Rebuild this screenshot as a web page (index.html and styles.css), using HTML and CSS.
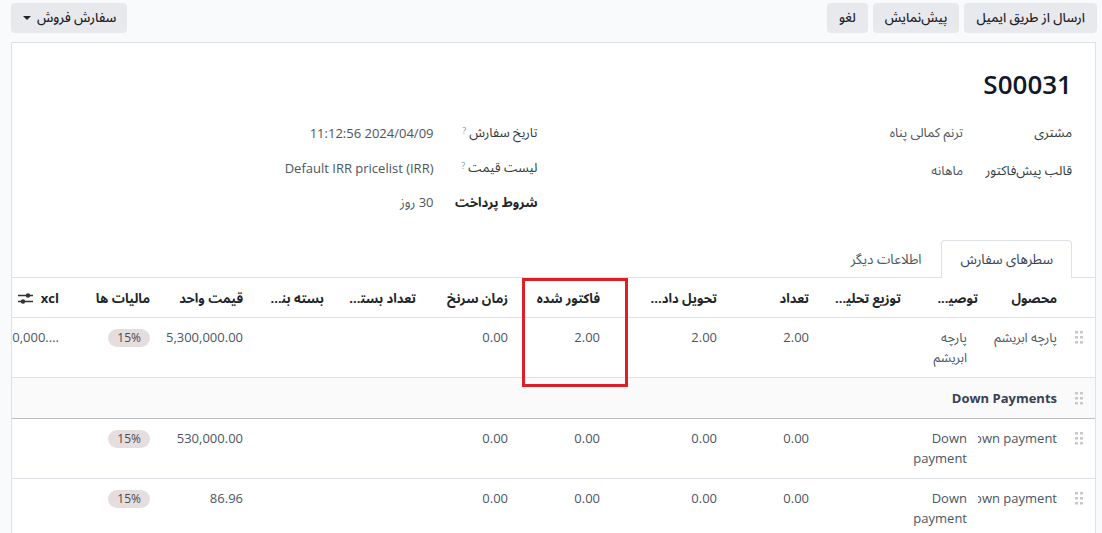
FILE: index.html
```html
<!DOCTYPE html>
<html lang="fa" dir="rtl">
<head>
<meta charset="utf-8">
<title>S00031</title>
<link rel="stylesheet" href="styles.css">
</head>
<body>
<div class="cp">
  <div class="cp-actions">
    <button class="btn">ارسال از طریق ایمیل</button>
    <button class="btn">پیش‌نمایش</button>
    <button class="btn">لغو</button>
  </div>
  <button class="btn btn-dd">سفارش فروش <span class="caret"></span></button>
</div>

<div class="sheet">
  <div class="sheet-head">
    <h1 class="title">S00031</h1>
    <div class="groups">
      <div class="group group-r">
        <div class="lbl">مشتری</div><div class="val">ترنم کمالی پناه</div>
        <div class="lbl">قالب پیش‌فاکتور</div><div class="val">ماهانه</div>
      </div>
      <div class="group group-l">
        <div class="lbl">تاریخ سفارش<sup class="help">?</sup></div><div class="val">2024/04/09 11:12:56</div>
        <div class="lbl">لیست قیمت<sup class="help">?</sup></div><div class="val"><span dir="ltr">Default IRR pricelist (IRR)</span></div>
        <div class="lbl lbl-b">شروط پرداخت</div><div class="val">30 روز</div>
      </div>
    </div>
    <div class="tabs">
      <div class="tab active">سطرهای سفارش</div>
      <div class="tab">اطلاعات دیگر</div>
    </div>
  </div>

  <div class="tbl-wrap">
    <table class="lines">
      <colgroup>
        <col class="c-h"><col class="c-prod"><col class="c-desc"><col class="c-92"><col class="c-92"><col class="c-117"><col class="c-92"><col class="c-92"><col class="c-92"><col class="c-81"><col class="c-93"><col class="c-91"><col class="c-108">
      </colgroup>
      <thead>
        <tr>
          <th></th>
          <th>محصول</th>
          <th class="th-desc">توصی‍...</th>
          <th>توزیع تحلی‍...</th>
          <th>تعداد</th>
          <th>تحویل داد...</th>
          <th>فاکتور شده</th>
          <th>زمان سرنخ</th>
          <th>تعداد بست‍...</th>
          <th>بسته بن‍...</th>
          <th>قیمت واحد</th>
          <th>مالیات ها</th>
          <th class="th-x">xcl<svg class="sliders" width="15" height="12" viewBox="0 0 15 12"><path d="M0 3.5h15M0 9.5h15" stroke="#333" stroke-width="1.4"/><circle cx="10" cy="3.5" r="2.2" fill="#333"/><circle cx="5" cy="9.5" r="2.2" fill="#333"/></svg></th>
        </tr>
      </thead>
      <tbody>
        <tr>
          <td class="handle"><svg width="9" height="13" viewBox="0 0 9 13"><g fill="#c6c9cc"><rect x="0" y="0" width="3" height="2.5"/><rect x="5" y="0" width="3" height="2.5"/><rect x="0" y="5" width="3" height="2.5"/><rect x="5" y="5" width="3" height="2.5"/><rect x="0" y="10" width="3" height="2.5"/><rect x="5" y="10" width="3" height="2.5"/></g></svg></td>
          <td class="prod">پارچه ابریشم</td>
          <td class="desc">پارچه ابریشم</td>
          <td></td>
          <td>2.00</td>
          <td>2.00</td>
          <td>2.00</td>
          <td>0.00</td>
          <td></td>
          <td></td>
          <td>5,300,000.00</td>
          <td><span class="badge">15%</span></td>
          <td class="nowrap"><span dir="ltr">6,360,000....</span></td>
        </tr>
        <tr class="section">
          <td class="handle"><svg width="9" height="13" viewBox="0 0 9 13"><g fill="#c6c9cc"><rect x="0" y="0" width="3" height="2.5"/><rect x="5" y="0" width="3" height="2.5"/><rect x="0" y="5" width="3" height="2.5"/><rect x="5" y="5" width="3" height="2.5"/><rect x="0" y="10" width="3" height="2.5"/><rect x="5" y="10" width="3" height="2.5"/></g></svg></td>
          <td colspan="12" class="sec-name">Down Payments</td>
        </tr>
        <tr>
          <td class="handle"><svg width="9" height="13" viewBox="0 0 9 13"><g fill="#c6c9cc"><rect x="0" y="0" width="3" height="2.5"/><rect x="5" y="0" width="3" height="2.5"/><rect x="0" y="5" width="3" height="2.5"/><rect x="5" y="5" width="3" height="2.5"/><rect x="0" y="10" width="3" height="2.5"/><rect x="5" y="10" width="3" height="2.5"/></g></svg></td>
          <td class="prod"><span dir="ltr">Down payment</span></td>
          <td class="desc">Down payment</td>
          <td></td>
          <td>0.00</td>
          <td>0.00</td>
          <td>0.00</td>
          <td>0.00</td>
          <td></td>
          <td></td>
          <td>530,000.00</td>
          <td><span class="badge">15%</span></td>
          <td></td>
        </tr>
        <tr>
          <td class="handle"><svg width="9" height="13" viewBox="0 0 9 13"><g fill="#c6c9cc"><rect x="0" y="0" width="3" height="2.5"/><rect x="5" y="0" width="3" height="2.5"/><rect x="0" y="5" width="3" height="2.5"/><rect x="5" y="5" width="3" height="2.5"/><rect x="0" y="10" width="3" height="2.5"/><rect x="5" y="10" width="3" height="2.5"/></g></svg></td>
          <td class="prod"><span dir="ltr">Down payment</span></td>
          <td class="desc">Down payment</td>
          <td></td>
          <td>0.00</td>
          <td>0.00</td>
          <td>0.00</td>
          <td>0.00</td>
          <td></td>
          <td></td>
          <td>86.96</td>
          <td><span class="badge">15%</span></td>
          <td></td>
        </tr>
      </tbody>
    </table>
    <div class="highlight"></div>
  </div>
</div>
</body>
</html>
```
FILE: styles.css
```css
* { box-sizing: border-box; }
html, body { margin: 0; padding: 0; }
body {
  background: #f9fafb;
  font-family: "Open Sans", "Noto Sans Arabic", "DejaVu Sans", sans-serif;
  font-size: 13px;
  color: #374151;
  overflow: hidden;
  height: 533px;
}
.cp {
  display: flex;
  justify-content: space-between;
  align-items: center;
  padding: 3px 5px 0 11px;
}
.cp-actions { display: flex; gap: 5px; }
.btn {
  height: 30px;
  padding: 0 12px;
  border: none;
  border-radius: 4px;
  background: #e7e9ed;
  color: #1f2328;
  font-family: inherit;
  font-size: 13px;
  font-weight: 500;
  display: inline-flex;
  align-items: center;
}
.btn-dd { gap: 6px; padding: 0 11px 0 12px; }
.caret {
  width: 0; height: 0;
  border-left: 4px solid transparent;
  border-right: 4px solid transparent;
  border-top: 4px solid #222;
}
.sheet {
  margin: 9px 6px 0 11px;
  background: #fff;
  border: 1px solid #dee2e6;
  border-bottom: none;
  height: 491px;
}
.sheet-head { padding: 23px 23px 0 23px; }
.title {
  margin: 0;
  font-size: 26px;
  line-height: 36px;
  font-weight: 600;
  color: #111827;
  font-family: "Open Sans", sans-serif;
}
.groups {
  display: grid;
  grid-template-columns: 1fr 1fr;
  column-gap: 16px;
  margin-top: 12px;
}
.group { display: grid; align-content: start; }
.group-r { grid-template-columns: 109px 1fr; grid-auto-rows: 38px; }
.group-l { grid-template-columns: 112px 1fr; grid-auto-rows: 35px; padding-top: 1px; }
.lbl, .val { display: flex; align-items: center; }
.lbl { color: #343a40; }
.group-l .lbl { padding-right: 8px; }
.lbl-b { font-weight: 700; color: #212529; }
.val { color: #4b5563; }
.help { color: #6aa3a8; font-size: 9px; margin-right: 3px; align-self: flex-start; margin-top: 9px; }
.tabs {
  display: flex;
  margin-top: 20px;
  margin-left: -23px;
  margin-right: -23px;
  padding-right: 23px;
  border-bottom: 1px solid #dee2e6;
}
.tab {
  height: 37px;
  padding: 0 18px 0 19px;
  display: flex;
  align-items: center;
  font-size: 13.5px;
  color: #4b5563;
  border: 1px solid transparent;
  border-bottom: none;
  margin-bottom: -1px;
}
.tab.active {
  background: #fff;
  border-color: #dee2e6;
  border-radius: 4px 4px 0 0;
  color: #374151;
  height: 38px;
}
.tbl-wrap { position: relative; overflow: hidden; }
.lines {
  table-layout: fixed;
  width: 1136px;
  border-collapse: collapse;
  line-height: 20px;
}
.c-h { width: 30px; } .c-prod { width: 87px; } .c-desc { width: 69px; }
.c-92 { width: 92px; } .c-117 { width: 117px; } .c-81 { width: 81px; }
.c-93 { width: 93px; } .c-91 { width: 91px; } .c-108 { width: 108px; }
.lines th {
  text-align: right;
  font-weight: 700;
  color: #212529;
  padding: 10px 8px 9px;
  border-bottom: 1px solid #dee2e6;
  white-space: nowrap;
  overflow: hidden;
}
.lines th.th-desc { padding-right: 0; }
.th-x .sliders { vertical-align: -1px; margin-right: 8px; }
.lines td {
  text-align: right;
  vertical-align: top;
  padding: 9px 8px 10px;
  color: #4b5563;
  border-bottom: 1px solid #dee2e6;
}
.lines td.handle { padding: 13px 0 0 10px; text-align: center; }
.lines td.handle svg { display: block; margin: 0 auto 0 0; }
.lines td.prod { white-space: nowrap; overflow: hidden; }
.lines td.desc { padding-right: 11px; padding-left: 0; }
.nowrap { white-space: nowrap; }
.section td { background: #fafafa; padding-top: 10px; padding-bottom: 10px; border-bottom-color: #b9bdc2; }
.section td.handle { padding-top: 14px; }
.sec-name { font-weight: 700; color: #374151 !important; }
.badge {
  display: inline-block;
  height: 18px;
  line-height: 18px;
  padding: 0 9px;
  border-radius: 9px;
  background: #e6dede;
  color: #4b4b4b;
  font-size: 12px;
}
.highlight {
  position: absolute;
  top: 0;
  right: 467px;
  width: 106px;
  height: 109px;
  border: 3px solid #de1f26;
}
```
